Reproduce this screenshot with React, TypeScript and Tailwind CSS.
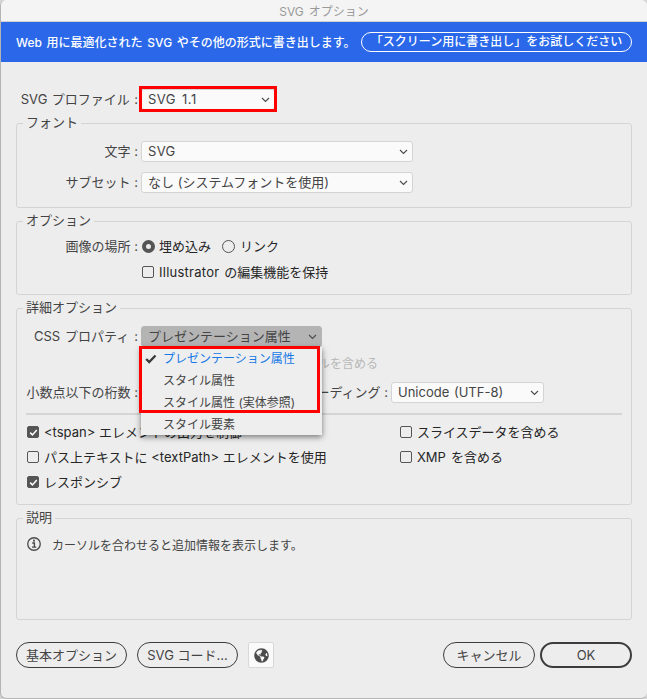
import type { ReactNode } from "react";
import { FaGlobeAmericas } from "react-icons/fa";

function Chevron() {
  return (
    <svg width="9" height="6" viewBox="0 0 9 6" className="shrink-0" fill="none" stroke="#4a4a4a" strokeWidth="1.1">
      <path d="M1 1l3.5 3.5L8 1" />
    </svg>
  );
}

function Tick({ size, color }: { size: number; color: string }) {
  return (
    <svg width={size} height={size} viewBox="0 0 12 12" fill="none" stroke={color} strokeWidth="2">
      <path d="M1.6 6.2l3 3L10.4 2.8" />
    </svg>
  );
}

function Group({ title, className, children }: { title: string; className: string; children?: ReactNode }) {
  return (
    <fieldset className={`w-[616px] min-w-0 rounded-[3px] border border-[#d4d4d4] ${className}`}>
      <legend className="ml-[6px] h-[17px] px-[3px] leading-[15px]">{title}</legend>
      {children}
    </fieldset>
  );
}

function Select({ className, children }: { className: string; children: ReactNode }) {
  return (
    <div className={`flex h-[21px] items-center justify-between rounded-[3px] border pr-[4px] pl-[6px] ${className}`}>
      <span className="leading-[19px]">{children}</span>
      <Chevron />
    </div>
  );
}

function Label({ className, children }: { className: string; children: ReactNode }) {
  return <span className={`shrink-0 pr-[3px] text-right ${className}`}>{children}</span>;
}

function Check({ checked, children }: { checked?: boolean; children: ReactNode }) {
  return (
    <div className="flex h-6 items-center text-[#262626]">
      <span
        className={`mr-[5px] flex size-3 shrink-0 items-center justify-center rounded-[2px] border border-[#555] ${checked ? "bg-[#555]" : ""}`}
      >
        {checked && <Tick size={9} color="#fff" />}
      </span>
      <span className="leading-6">{children}</span>
    </div>
  );
}

function Pill({ className, children }: { className: string; children: ReactNode }) {
  return (
    <button className={`flex h-[26px] items-center justify-center rounded-full border-[#3c3c3c] leading-6 ${className}`}>
      {children}
    </button>
  );
}

export default function App() {
  return (
    <div className="h-[699px] w-[647px] overflow-hidden bg-[#d5d5d5]">
      <div className="flex h-[699px] w-[647px] flex-col overflow-hidden rounded-[6px] border-b border-l border-[#b4b4b4] bg-[#ededed] font-['Inter','Noto_Sans_CJK_JP',sans-serif] text-[13px] whitespace-nowrap text-[#444]">
        <div className="flex h-[22px] shrink-0 items-center justify-center border-b border-[#d0d0d0] bg-[#f4f4f4] pt-[2px] text-xs text-[#9a9a9a] [word-spacing:1.5px]">
          SVG オプション
        </div>
        <div className="flex h-10 shrink-0 items-center justify-between bg-[#2a68e9] pr-[15px] pl-[15px] text-xs font-medium text-white">
          <span className="pt-[2px] [word-spacing:1.5px]">Web 用に最適化された SVG やその他の形式に書き出します。</span>
          <button className="flex h-5 w-[271px] items-center justify-center rounded-full border border-white">
            「スクリーン用に書き出し」をお試しください
          </button>
        </div>

        <div className="relative mt-[27px] flex h-[21px] items-center">
          <Label className="w-[140px] [word-spacing:0.8px]">SVG プロファイル :</Label>
          <Select className="w-[134px] border-[#d4d4d4] bg-[#fafafa]">
            <span className="tracking-[0.5px] [word-spacing:1.8px]">SVG 1.1</span>
          </Select>
          <div className="absolute -top-[3px] left-[138px] h-[26px] w-[138px] border-3 border-[#f00]" />
        </div>

        <div className="mt-[5px] flex flex-col gap-[5px] pl-[15px]">
          <Group title="フォント" className="h-[93px]">
            <div className="flex flex-col gap-[10px] pt-[9px]">
              <div className="flex items-center">
                <Label className="w-[124px]">文字 :</Label>
                <Select className="w-[272px] border-[#d4d4d4] bg-[#fafafa]">
                  <span className="tracking-[0.3px]">SVG</span>
                </Select>
              </div>
              <div className="flex items-center">
                <Label className="w-[124px]">サブセット :</Label>
                <Select className="w-[272px] border-[#d4d4d4] bg-[#fafafa]">なし (システムフォントを使用)</Select>
              </div>
            </div>
          </Group>

          <Group title="オプション" className="h-[82px]">
            <div className="flex h-[21px] translate-y-[6px] items-center">
              <Label className="w-[124px]">画像の場所 :</Label>
              <span className="ml-[1px] size-[13px] rounded-full border-[4.5px] border-[#555]" />
              <span className="ml-[4px] text-[#262626]">埋め込み</span>
              <span className="ml-[11px] size-[13px] rounded-full border border-[#555]" />
              <span className="ml-[5px] text-[#262626]">リンク</span>
            </div>
            <div className="mt-[9px] pl-[125px]">
              <Check>
                <span className="tracking-[0.25px]">Illustrator </span>
                <span className="ml-[1px]">の編集機能を保持</span>
              </Check>
            </div>
          </Group>

          <Group title="詳細オプション" className="h-[205px]">
            <div className="relative flex flex-col pt-[9px]">
              <div className="flex items-center">
                <Label className="w-[124px] [word-spacing:1.3px]">CSS プロパティ :</Label>
                <Select className="w-[181px] border-[#b4b4b4] bg-[#b4b4b4]">プレゼンテーション属性</Select>
              </div>
              <div className="mt-[7px] flex h-5 w-[361px] items-center justify-end text-xs text-[#b8b8b8]">
                ルを含める
              </div>
              <div className="mt-[8px] flex h-[21px] items-center">
                <Label className="w-[124px]">小数点以下の桁数 :</Label>
                <Label className="w-[250px]">エンコーディング :</Label>
                <Select className="w-[153px] border-[#d4d4d4] bg-[#fafafa]">
                  <span className="[word-spacing:1px]">Unicode (UTF-8)</span>
                </Select>
              </div>
              <div className="mt-[10px] ml-[9px] h-[2px] w-[596px] bg-[#d4d4d4]" />
              <div className="mt-[5px] grid grid-cols-[373px_1fr] gap-y-[1px] pl-[10px]">
                <Check checked>&lt;tspan&gt; エレメントの出力を制御</Check>
                <Check>スライスデータを含める</Check>
                <Check>パス上テキストに &lt;textPath&gt; エレメントを使用</Check>
                <Check>
                  <span className="[word-spacing:1.5px]">XMP を含める</span>
                </Check>
                <Check checked>レスポンシブ</Check>
              </div>

              <div className="absolute top-[30px] left-[124px] h-[88px] w-[181px] bg-[#eee] text-xs shadow-[0_2px_6px_rgba(0,0,0,0.5)]">
                <div className="flex h-[22px] items-center pt-[2px] text-[#1478e6]">
                  <span className="w-[22px] pl-[4px]">
                    <svg width="12" height="10" viewBox="0 0 12 10" fill="none" stroke="#3c3c3c" strokeWidth="2.4">
                      <path d="M1.2 5l3 3L10.5 1.5" />
                    </svg>
                  </span>
                  プレゼンテーション属性
                </div>
                <div className="flex h-[22px] items-center pt-[2px] pl-[22px]">スタイル属性</div>
                <div className="flex h-[22px] items-center pt-[2px] pl-[22px]">スタイル属性 (実体参照)</div>
                <div className="flex h-[22px] items-center pt-[2px] pl-[22px]">スタイル要素</div>
                <div className="absolute -top-px -left-[2px] h-[67px] w-[181px] border-3 border-[#f00]" />
              </div>
            </div>
          </Group>

          <Group title="説明" className="h-[110px]">
            <div className="flex items-start pt-[10px] pl-[10px] text-xs">
              <svg width="14" height="14" viewBox="0 0 15 15" fill="none" stroke="#4a4a4a">
                <circle cx="7.5" cy="7.5" r="6.7" strokeWidth="1.4" />
                <path d="M5.6 6.4H7.9V10.7M5.4 10.9H9.9" strokeWidth="1.5" />
                <circle cx="7.5" cy="3.9" r="1.1" fill="#4a4a4a" stroke="none" />
              </svg>
              <span className="ml-[11px] pt-[1px] leading-[16px]">カーソルを合わせると追加情報を表示します。</span>
            </div>
          </Group>
        </div>

        <div className="mt-[22px] flex pl-[15px]">
          <Pill className="w-[111px] border">基本オプション</Pill>
          <Pill className="ml-[10px] w-[101px] border">SVG コード...</Pill>
          <button className="ml-[10px] flex size-[26px] items-center justify-center rounded-[2px] border border-[#d8d8d8] bg-[#fafafa]">
            <FaGlobeAmericas size={15} color="#4c4c4c" />
          </button>
          <Pill className="ml-[169px] w-[92px] border">キャンセル</Pill>
          <Pill className="ml-[5px] w-[92px] border-2">OK</Pill>
        </div>
      </div>
    </div>
  );
}
